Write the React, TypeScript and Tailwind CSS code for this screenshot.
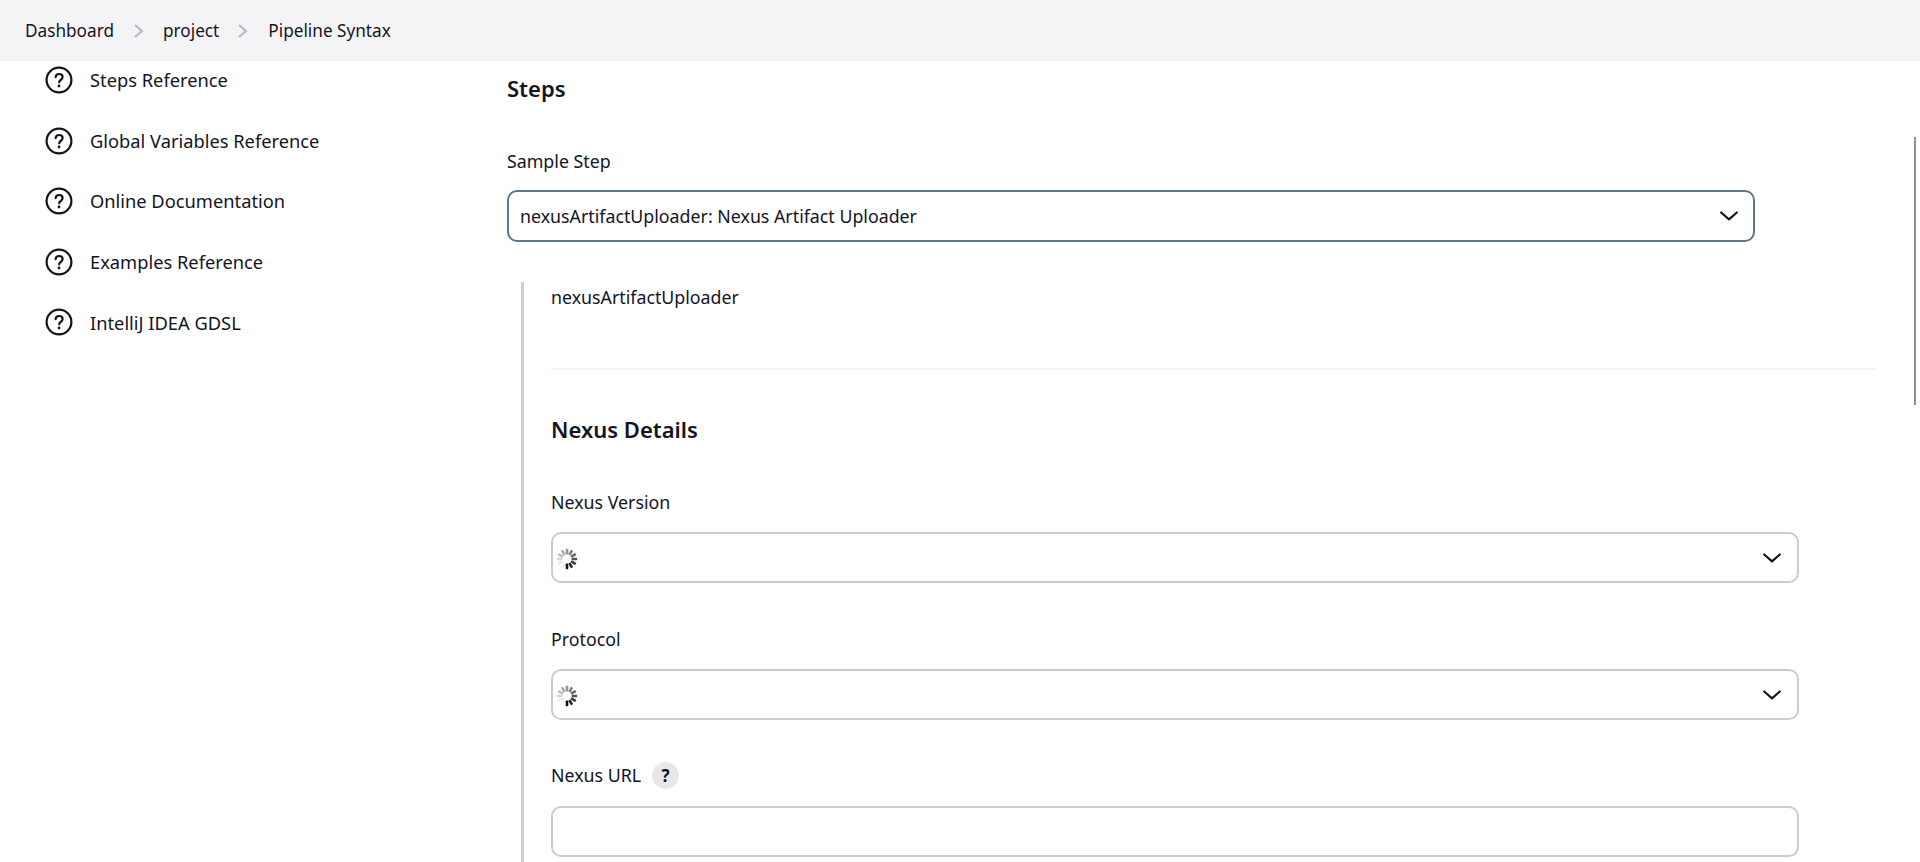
import React from "react";

const font = { fontFamily: '"Noto Sans", "Open Sans", sans-serif' };

function HelpIcon() {
  return (
    <svg width="28" height="28" viewBox="0 0 28 28" fill="none" className="shrink-0">
      <circle cx="14" cy="14" r="12.4" stroke="#14141f" strokeWidth="2.2" />
      <path d="M10.6 11.2c.2-2 1.6-3.2 3.5-3.2 2 0 3.5 1.3 3.5 3 0 1.4-.8 2.2-1.9 3-.9.6-1.5 1.2-1.5 2.3" stroke="#14141f" strokeWidth="2.2" strokeLinecap="round" />
      <circle cx="14" cy="20" r="1.4" fill="#14141f" />
    </svg>
  );
}

function Chevron() {
  return (
    <svg width="18" height="10" viewBox="0 0 18 10" fill="none" className="shrink-0">
      <path d="M1.2 1.5 9 8.3l7.8-6.8" stroke="#14141f" strokeWidth="2.2" strokeLinecap="round" strokeLinejoin="round" />
    </svg>
  );
}

function Spinner() {
  const spokes = Array.from({ length: 12 }, (_, i) => i);
  return (
    <svg width="22" height="22" viewBox="0 0 22 22" className="mt-[2px] shrink-0 blur-[0.3px]">
      {spokes.map((i) => (
        <rect key={i} x="9.7" y="0.8" width="2.6" height="5.6" rx="0.8" fill="#111" opacity={Math.max(0.06, ((i + 5) % 12) / 11)} transform={`rotate(${i * 30} 11 11)`} />
      ))}
    </svg>
  );
}

function LoadingSelect() {
  return (
    <div className="flex h-[51px] w-[1248px] items-center justify-between rounded-[10px] border-2 border-[#c5ced3] pl-[3px] pr-[16px]">
      <Spinner />
      <Chevron />
    </div>
  );
}

const links = ["Steps Reference", "Global Variables Reference", "Online Documentation", "Examples Reference", "IntelliJ IDEA GDSL"];

export default function App() {
  return (
    <div style={font} className="relative flex h-[862px] flex-col overflow-hidden bg-white text-[17.8px] text-[#14141f]">
      <header className="flex h-[61px] shrink-0 items-center bg-[#f4f4f7] pl-[25px] text-[17.2px]">
        <span>Dashboard</span>
        <svg width="12" height="16" viewBox="0 0 12 16" fill="none" className="ml-[19px] mr-[18px]">
          <path d="M2 2l7 6-7 6" stroke="#b4b4c0" strokeWidth="2" />
        </svg>
        <span>project</span>
        <svg width="12" height="16" viewBox="0 0 12 16" fill="none" className="ml-[18px] mr-[19px]">
          <path d="M2 2l7 6-7 6" stroke="#b4b4c0" strokeWidth="2" />
        </svg>
        <span>Pipeline Syntax</span>
      </header>

      <div className="flex min-h-0 flex-1">
        <nav className="flex w-[507px] shrink-0 flex-col gap-[32.6px] pl-[45px] pt-[5px] text-[18.3px]">
          {links.map((l) => (
            <div key={l} className="flex h-[28px] items-center gap-[17px]">
              <HelpIcon />
              <span>{l}</span>
            </div>
          ))}
        </nav>

        <main className="min-w-0 flex-1">
          <h2 className="mt-[13px] text-[22px] font-semibold leading-[28px]">Steps</h2>
          <div className="mt-[48px] leading-[22px]">Sample Step</div>
          <div className="mt-[18px] flex h-[52px] w-[1248px] items-center justify-between rounded-[10px] border-2 border-[#5c7889] pl-[11px] pr-[15px]">
            <span>nexusArtifactUploader: Nexus Artifact Uploader</span>
            <Chevron />
          </div>

          <section className="ml-[14px] mt-[40px] w-[1355px] border-l-[3px] border-[#c8ced4] pb-[40px] pl-[27px]">
            <div className="pt-[4px] leading-[22px]">nexusArtifactUploader</div>
            <hr className="mt-[60px] border-0 border-t-2 border-[#f2f2f7]" />
            <h2 className="mt-[45px] text-[22px] font-semibold leading-[28px]">Nexus Details</h2>

            <div className="mt-[48px] leading-[22px]">Nexus Version</div>
            <div className="mt-[19px]"><LoadingSelect /></div>

            <div className="mt-[45px] leading-[22px]">Protocol</div>
            <div className="mt-[19px]"><LoadingSelect /></div>

            <div className="mt-[42px] flex h-[27px] items-center gap-[11px]">
              <span>Nexus URL</span>
              <span className="flex h-[27px] w-[27px] items-center justify-center rounded-full bg-[#e8e8e8] text-[17px] font-bold">?</span>
            </div>
            <div className="mt-[17px] h-[51px] w-[1248px] rounded-[10px] border-2 border-[#c5ced3]" />
          </section>
        </main>
      </div>

      <div className="absolute left-[1914px] top-[137px] h-[268px] w-[2px] bg-[#8f8f8f]" />
    </div>
  );
}
